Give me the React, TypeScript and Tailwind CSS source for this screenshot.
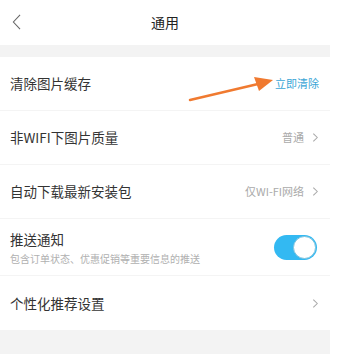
import { useState } from "react";

function Chevron({ className = "" }: { className?: string }) {
    return (
        <svg viewBox="0 0 8 12" className={`w-[7px] h-[11px] ${className}`} fill="none" stroke="#aaa" strokeWidth={1.2}>
            <path d="M1.5 1.5L6 6l-4.5 4.5" />
        </svg>
    );
}

function Row({ title, children, last }: { title: string; children?: React.ReactNode; last?: boolean }) {
    return (
        <div className={`flex items-center justify-between h-[54px] pl-[10px] pr-[11px] ${last ? "" : "border-b border-[#f4f4f4]"}`}>
            <span className="text-[13.5px] text-[#333]">{title}</span>
            <div className="flex items-center gap-[8px]">{children}</div>
        </div>
    );
}

export default function App() {
    const [push, setPush] = useState(true);

    return (
        <div className="w-[348px] h-[354px] bg-white overflow-hidden relative" style={{ fontFamily: '"Noto Sans CJK SC", "Noto Sans", sans-serif' }}>
            <div className="w-[330px] h-full flex flex-col">
                <div className="h-[45px] flex items-center relative">
                    <svg viewBox="0 0 10 18" className="absolute left-[12px] top-[14px] w-[9px] h-[16px]" fill="none" stroke="#666" strokeWidth={1.2}>
                        <path d="M9 1L1.5 9 9 17" />
                    </svg>
                    <div className="flex-1 text-center text-[14px] text-[#222]">通用</div>
                </div>
                <div className="h-[12px] bg-[#f3f3f3]" />

                <Row title="清除图片缓存">
                    <span className="text-[11px] text-[#3aa6d6]">立即清除</span>
                </Row>
                <Row title="非WIFI下图片质量">
                    <span className="text-[11px] text-[#aaa]">普通</span>
                    <Chevron />
                </Row>
                <Row title="自动下载最新安装包">
                    <span className="text-[11px] text-[#aaa]">仅WI-FI网络</span>
                    <Chevron />
                </Row>
                <div className="flex items-center justify-between h-[57px] pl-[10px] pr-[13px] border-b border-[#f4f4f4]">
                    <div className="flex flex-col gap-[2px]">
                        <span className="text-[13.5px] text-[#333] leading-[20px]">推送通知</span>
                        <span className="text-[10px] text-[#b0b0b0] leading-[15px]">包含订单状态、优惠促销等重要信息的推送</span>
                    </div>
                    <button
                        onClick={() => setPush(!push)}
                        className={`w-[43px] h-[25px] rounded-full flex items-center p-[1px] ${push ? "bg-[#33b9f2] justify-end" : "bg-[#ddd] justify-start"}`}
                    >
                        <span className="w-[23px] h-[23px] rounded-full bg-white border border-[#7fc3de]" />
                    </button>
                </div>
                <Row title="个性化推荐设置" last>
                    <Chevron />
                </Row>
                <div className="flex-1 bg-[#f3f3f3]" />
            </div>

            <svg className="absolute left-0 top-0 pointer-events-none" width="348" height="354">
                <line x1="190" y1="100" x2="258" y2="84" stroke="#f07a30" strokeWidth="2.5" strokeLinecap="round" />
                <polygon points="273,80 254,77 259,91" fill="#f07a30" />
            </svg>
        </div>
    );
}
